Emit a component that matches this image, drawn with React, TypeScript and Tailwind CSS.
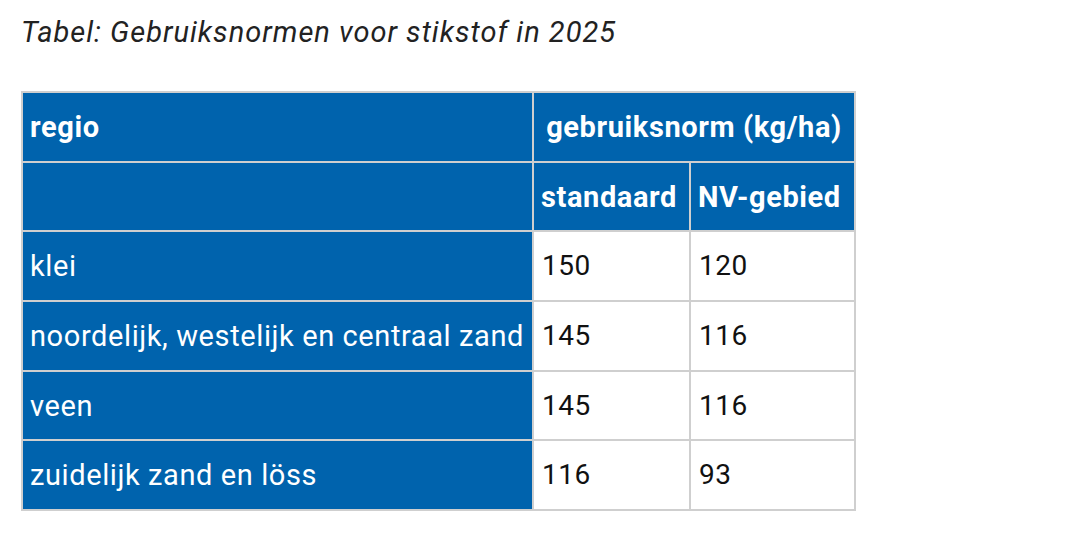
import React from 'react';

const rows = [
  { regio: 'klei', standaard: '150', nv: '120' },
  { regio: 'noordelijk, westelijk en centraal zand', standaard: '145', nv: '116' },
  { regio: 'veen', standaard: '145', nv: '116' },
  { regio: 'zuidelijk zand en löss', standaard: '116', nv: '93' },
];

const App: React.FC = () => {
  return (
    <div className="min-h-[545px] w-[1070px] bg-white font-['Roboto',sans-serif]">
      <div className="px-[21px] pt-[14px]">
        <p className="h-[36px] text-[29px] leading-[36px] tracking-[1px] italic text-[#222]">
          Tabel: Gebruiksnormen voor stikstof in 2025
        </p>
        <table className="mt-[41px] border-collapse text-[29px] leading-[34px] tracking-[0.6px]">
          <colgroup>
            <col className="w-[511px]" />
            <col className="w-[157px]" />
            <col className="w-[165px]" />
          </colgroup>
          <thead>
            <tr className="h-[69.7px] bg-[#0063ad] font-bold text-white">
              <th className="border-2 border-[#cfcfcf] px-[7px] text-left">regio</th>
              <th colSpan={2} className="border-2 border-[#cfcfcf] px-[7px] text-center">
                gebruiksnorm (kg/ha)
              </th>
            </tr>
            <tr className="h-[69.7px] bg-[#0063ad] font-bold text-white">
              <th className="border-2 border-[#cfcfcf] px-[7px]"></th>
              <th className="border-2 border-[#cfcfcf] px-[7px] text-left">standaard</th>
              <th className="border-2 border-[#cfcfcf] px-[7px] text-left">NV-gebied</th>
            </tr>
          </thead>
          <tbody>
            {rows.map((r) => (
              <tr key={r.regio} className="h-[69.7px]">
                <td className="border-2 border-[#cfcfcf] bg-[#0063ad] px-[7px] whitespace-nowrap text-white">
                  {r.regio}
                </td>
                <td className="border-2 border-[#cfcfcf] px-[8px] text-[28px] tracking-[0.5px] text-[#111]">
                  {r.standaard}
                </td>
                <td className="border-2 border-[#cfcfcf] px-[8px] text-[28px] tracking-[0.5px] text-[#111]">
                  {r.nv}
                </td>
              </tr>
            ))}
          </tbody>
        </table>
      </div>
    </div>
  );
};

export default App;
